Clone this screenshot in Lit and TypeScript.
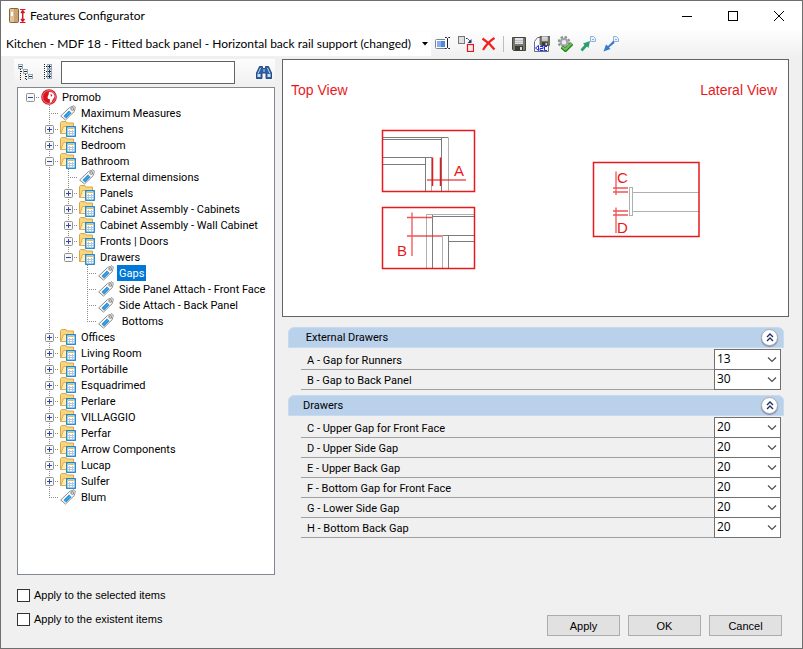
import { LitElement, html, svg, css, nothing } from "lit";
import { customElement, state } from "lit/decorators.js";
import { classMap } from "lit/directives/class-map.js";

interface TreeNode {
  label: string;
  children?: TreeNode[];
  folder?: boolean;
}

const folder = (label: string, children?: TreeNode[]): TreeNode => ({ label, children, folder: true });
const leaf = (label: string): TreeNode => ({ label });

const TREE: TreeNode = folder("Promob", [
  leaf("Maximum Measures"),
  folder("Kitchens"),
  folder("Bedroom"),
  folder("Bathroom", [
    leaf("External dimensions"),
    folder("Panels"),
    folder("Cabinet Assembly - Cabinets"),
    folder("Cabinet Assembly - Wall Cabinet"),
    folder("Fronts | Doors"),
    folder("Drawers", [
      leaf("Gaps"),
      leaf("Side Panel Attach - Front Face"),
      leaf("Side Attach - Back Panel"),
      leaf(" Bottoms"),
    ]),
  ]),
  folder("Offices"),
  folder("Living Room"),
  folder("Portábille"),
  folder("Esquadrimed"),
  folder("Perlare"),
  folder("VILLAGGIO"),
  folder("Perfar"),
  folder("Arrow Components"),
  folder("Lucap"),
  folder("Sulfer"),
  leaf("Blum"),
]);

const SECTIONS = [
  {
    title: " External Drawers",
    rows: [
      ["A - Gap for Runners", "13"],
      ["B - Gap to Back Panel", "30"],
    ],
  },
  {
    title: "Drawers",
    rows: [
      ["C - Upper Gap for Front Face", "20"],
      ["D - Upper Side Gap", "20"],
      ["E - Upper Back Gap", "20"],
      ["F - Bottom Gap for Front Face", "20"],
      ["G - Lower Side Gap", "20"],
      ["H - Bottom Back Gap", "20"],
    ],
  },
];

const icon = (body: unknown, w = 16, h = 16) =>
  html`<svg width=${w} height=${h} viewBox="0 0 ${w} ${h}" aria-hidden="true">${body}</svg>`;

const appIcon = html`<svg width="17" height="16" viewBox="0 0 17 16" aria-hidden="true">
  <rect x=".5" y=".5" width="9" height="14" rx="1" fill="#c9a576" stroke="#8a6238"/>
  <rect x="1" y="1" width="4" height="13" fill="#dfc39b"/>
  <rect x="2" y="4" width="2" height="4" fill="#fff"/>
  <path d="M11 1.500h5.500M11 14.500h5.500" stroke="#d8172c"/>
  <path d="M13.700 3v10M12 5l1.700-2.200L15.500 5M12 11l1.700 2.200 1.800-2.200" fill="none" stroke="#d8172c" stroke-width="1.500"/></svg>`;

const minIcon = icon(svg`<path d="M0 5.500h10" stroke="#000"/>`, 10, 10);
const maxIcon = icon(svg`<rect x=".5" y=".5" width="9" height="9" fill="none" stroke="#000"/>`, 10, 10);
const closeIcon = icon(svg`<path d="M0 0l10 10M10 0L0 10" stroke="#000"/>`, 10, 10);

const renameIcon = icon(svg`
  <rect x=".5" y="3.500" width="12" height="9" rx="1" fill="#fff" stroke="#7b8492"/>
  <rect x="2" y="5" width="8" height="6" fill="#4f8bdd"/><rect x="2" y="5" width="4" height="6" fill="#86aeea"/>
  <rect x="10" y="1" width="4" height="13" fill="#fbfbfb"/>
  <path d="M10 1.500h1.500l1 1 1-1H15M12.500 2.500v9M10 12.500h1.500l1-1 1 1H15" fill="none" stroke="#222"/>`);
const replaceIcon = icon(svg`
  <rect x=".5" y=".5" width="6" height="7" fill="#e4dfe2" stroke="#777"/>
  <rect x="9.500" y="8.500" width="6" height="7" fill="#fde9e9" stroke="#e3151b" stroke-width="1.200"/>
  <path d="M8 2.500h1.500l3 3" fill="none" stroke="#173a78" stroke-dasharray="2 .6"/>
  <path d="M13.500 3v4H9.500z" fill="#173a78"/>`);
const deleteIcon = icon(svg`
  <path d="M1.500 2.500C6 5.500 10 9 13.500 13.500" fill="none" stroke="#f0211f" stroke-width="2.200"/>
  <path d="M13.500 2C8.500 5 5 9 2 14" fill="none" stroke="#f0211f" stroke-width="2.200"/>`);
const disk = svg`
  <path d="M1.500 1.500h13v13h-12l-1-1z" fill="#77756a" stroke="#45443d"/>
  <rect x="4" y="2" width="8" height="6" fill="#dfe2e6"/><path d="M4 4.500h8M4 6.500h8" stroke="#b9bfc6"/>
  <rect x="4" y="10" width="8" height="5" fill="#3b3a34"/><rect x="9" y="11" width="2" height="3" fill="#dcdcdc"/>`;
const saveIcon = icon(disk);
const saveAsIcon = icon(svg`
  <path d="M.500 5.500l3-4H12l2.500 5v9H.500z" fill="#f7f8fa" stroke="#69707c"/>
  <g transform="translate(5 -1) scale(.72)">${disk}</g>
  <path d="M1.500 12l3-2.500v5zM6 10.500h3v2H6v2h3.500M13 10.500h-2.500v4H13" fill="none" stroke="#1d29e0"/>`);
const gearIcon = icon(svg`
  <circle cx="7" cy="6.200" r="5.200" fill="none" stroke="#8d9093" stroke-width="2.200" stroke-dasharray="2.400 1.680"/>
  <circle cx="7" cy="6.200" r="3.400" fill="#eee" stroke="#a1a4a7" stroke-width="2.200"/>
  <path d="M5 11l3.500 3 6.500-6.500" fill="none" stroke="#267a25" stroke-width="3.800"/>
  <path d="M5.300 11l3.200 2.500 6.200-6.200" fill="none" stroke="#69c94b" stroke-width="2"/>`);
const page = svg`<path d="M10.500.500h3l2 2v3h-5z" fill="#eaf3fd" stroke="#8fb2da"/><path d="M12 3.500h2" stroke="#8fb2da"/>`;
const exportIcon = icon(svg`${page}
  <path d="M.500 13.500l4-4.500L3 7.500 10 5 8.500 12 7 10.500l-4.500 5z" fill="#2c9c74"/>`);
const importIcon = icon(svg`${page}
  <path d="M10.500 4.500L5 10 3 8.500 .500 15.500 7.500 13 6 11.500 11.500 7z" fill="#377bcb"/>`);

const miniBox = (x: number, y: number, plus: boolean) => svg`
  <rect x=${x + 0.5} y=${y + 0.5} width="4" height="4" fill="#f6f9fc" stroke="#9aa7b5"/>
  <path d="M${x + 1} ${y + 2.5}h3" stroke="#15305a"/>
  ${plus ? svg`<path d="M${x + 2.5} ${y + 1}v3" stroke="#15305a"/>` : nothing}`;
const collapseIcon = icon(svg`
  <path d="M2.500 5v11M7.500 10v6M3 7.500h2M8 12.500h2M8 15.500h2" stroke="#222" stroke-dasharray="1 1"/>
  ${miniBox(0, 0, false)}${miniBox(5, 5, false)}${miniBox(10, 10, false)}`);
const expandIcon = icon(svg`
  <path d="M3.500 0v16M5 2.500h2M5 7.500h2M5 12.500h2" stroke="#222" stroke-dasharray="1 1"/>
  ${miniBox(6, 0, true)}${miniBox(6, 5, true)}${miniBox(6, 10, true)}`);
const findIcon = icon(svg`
  <path d="M3.500 2.500h3v2h3v-2h3L15.500 9v5.500h-5.500V9h-4v5.500H.500V9z" fill="#2f5f9f" stroke="#244c86" stroke-linejoin="round"/>
  <path d="M4.500 4L2 9.500M11.500 4L14 9.500M8 5v3" stroke="#b5d2f0"/>
  <rect x="1.500" y="10" width="3" height="3" fill="#c9def4"/><rect x="11.500" y="10" width="3" height="3" fill="#c9def4"/>`);

const logoIcon = icon(svg`
  <circle cx="8" cy="8" r="7.800" fill="#d8141f"/>
  <circle cx="8" cy="8" r="6.400" fill="none" stroke="#f1a5a9" stroke-width=".7"/>
  <path d="M8 3c3-.5 5.500 1.500 5.500 4.500-.5 2.500-2.500 3-2.500 5L9 14c-.5-1.500.5-3-.5-4H7L6.500 8 7.500 6z" fill="#fff"/>
  <path d="M9.500 5l2 1-1.500 2z" fill="#d8141f"/>`);
const folderIcon = icon(svg`
  <path d="M.500 12.500V1.500L1.500.500H6l1 1.500h6.500v10.500z" fill="#f8d67c" stroke="#dba54c"/>
  <path d="M1 12.500L3.500 5.500h11l-2.500 7z" fill="#ffefb4" stroke="#dfae55"/>
  <rect x="6.750" y="5.750" width="8.500" height="9.500" fill="#fff" stroke="#1480c2" stroke-width="1.300"/>
  <path d="M8 7.500h6" stroke="#f3b552"/>
  <path d="M9.500 9v5M12.500 9v5M8 10.500h6M8 12.500h6" stroke="#a9cbe8"/>`);
const tagIcon = icon(svg`
  <path d="M.700 11L9.500 2.500 14 .800l1.300 1.300L14.300 6.500 5.500 15z" fill="#fafafa" stroke="#8a8a8a"/>
  <path d="M9.500 3L14 1.300l.800 1.200-1 4z" fill="#d2d2d2"/>
  <circle cx="12.200" cy="4" r="1.300" fill="#fff" stroke="#777" stroke-width=".9"/>
  <path d="M3.500 11l5.500-5.500L11.500 8 6 13.500z" fill="#2490d8"/>
  <path d="M4.700 12.300l5.500-5.500" stroke="#8fd0f5" stroke-width=".7" stroke-dasharray="1 .6"/>`);

const expander = (open: boolean) => icon(svg`
  <rect x=".5" y=".5" width="8" height="8" rx="1" fill="#f7f7f7" stroke="#919191"/>
  <path d="M2 4.500h5" stroke="#30499a"/>
  ${open ? nothing : svg`<path d="M4.500 2v5" stroke="#30499a"/>`}`, 9, 9);

const chevron = html`<svg class="chevron" width="10" height="6" viewBox="0 0 10 6" aria-hidden="true">
  <path d="M1 .5l4 4 4-4" fill="none" stroke="#505050" stroke-width="1.200"/></svg>`;

@customElement("feature-diagram")
export class FeatureDiagram extends LitElement {
  static styles = css`
    :host { display: block; background: #fff; border: 1px solid #646464; }
    svg { display: block; width: 100%; height: auto; font-family: "Liberation Sans", Arial, sans-serif; }
    .red { stroke: #e8191c; fill: none; }
    .thick { stroke-width: 1.5; }
    .soft { stroke-width: 1.3; stroke-opacity: 0.75; }
    .dark { stroke: #7c7c7c; fill: none; }
    .light { stroke: #b0b0b0; fill: none; }
    .txt { fill: #e8191c; font-size: 14px; }
    .mark { fill: #e8191c; font-size: 15px; }
  `;
  render() {
    return html`<svg viewBox="0 0 505 256" role="img" aria-label="Top and lateral views of drawer gaps">
      <text class="txt" x="8" y="35">Top View</text>
      <text class="txt" x="494" y="35" text-anchor="end">Lateral View</text>

      <path class="light" d="M158 77.500H165.500V132M148.500 97.500V132"/>
      <path class="dark" d="M100 77.500H165M100 79.500H158.500M158.500 77.500V132M100 97.500H149M142.500 97.500V132M100 104.500H142.500"/>
      <path class="red thick" d="M149.500 97.500V126M157.500 97.500V126"/>
      <path class="red soft" d="M144 120H183"/>
      <rect class="red thick" x="99.500" y="70.500" width="92" height="61"/>
      <text class="mark" x="171" y="116">A</text>

      <path class="light" d="M143.500 209V154.500H192M159.500 209V175.500"/>
      <path class="dark" d="M149.500 155V209M149.500 156.500H192M159.500 175.500H192M165.500 175.500V209M165.500 181.500H192"/>
      <path class="red soft" d="M129 152.500V196M124 157.500H149M124 176H159"/>
      <rect class="red thick" x="99.500" y="147.500" width="92" height="61"/>
      <text class="mark" x="114" y="196">B</text>

      <path class="light" d="M349.500 132.500H416M349.500 151.500H416"/>
      <rect class="light" x="346.500" y="127.500" width="3" height="28"/>
      <path class="red soft" d="M333 111.500V135M330 128H345M330 132H345M333 147.500V173M330 151H345M330 155H345"/>
      <rect class="red thick" x="310.500" y="102.500" width="105.500" height="74"/>
      <text class="mark" x="334" y="123">C</text>
      <text class="mark" x="334" y="173">D</text>
    </svg>`;
  }
}

@customElement("feature-tree")
export class FeatureTree extends LitElement {
  @state() private selected = "Gaps";

  static styles = css`
    :host {
      display: block;
      background: #fff;
      border: 1px solid #828790;
      padding: 1px 3px;
      font: 11px/16px Roboto, "Liberation Sans", sans-serif;
      overflow: hidden;
    }
    svg { display: block; }
    .row { display: flex; height: 16px; white-space: pre; }
    .cell {
      flex: 0 0 19px;
      display: grid;
      place-items: center;
      --dots-y: repeating-linear-gradient(#8a8a8a 0 1px, transparent 1px 2px);
      --dots-x: repeating-linear-gradient(90deg, #8a8a8a 0 1px, transparent 1px 2px);
      background-repeat: no-repeat;
    }
    .line { background-image: var(--dots-y); background-size: 1px 100%; background-position: 9px 0; }
    .root { background-image: var(--dots-x); background-size: 10px 1px; background-position: 9px 8px; }
    .branch {
      background-image: var(--dots-y), var(--dots-x);
      background-size: 1px 100%, 10px 1px;
      background-position: 9px 0, 9px 8px;
    }
    .last { background-size: 1px 8px, 10px 1px; }
    .glyph { flex: none; width: 16px; margin: 0 3px 0 1px; }
    .label { padding: 0 2px; height: 16px; line-height: 18px; cursor: default; }
    .selected { background: #0078d7; color: #fff; }
  `;

  private row(node: TreeNode, guides: boolean[], last: boolean, depth: number): unknown {
    const own = { cell: true, root: depth === 0, branch: depth > 0, last: last && depth > 0 };
    const glyph = depth === 0 ? logoIcon : node.folder ? folderIcon : tagIcon;
    const kids = node.children ?? [];
    const next = depth === 0 ? [false] : [...guides, !last];
    return html`<div class="row" role="treeitem" aria-selected=${node.label === this.selected} aria-level=${depth + 1}>
        ${guides.map((g) => html`<span class=${classMap({ cell: true, line: g })}></span>`)}
        <span class=${classMap(own)}>${node.folder ? expander(kids.length > 0) : nothing}</span>
        <span class="glyph">${glyph}</span>
        <span class=${classMap({ label: true, selected: node.label === this.selected })}
          @click=${() => (this.selected = node.label)}>${node.label}</span>
      </div>
      ${kids.map((k, i) => this.row(k, next, i === kids.length - 1, depth + 1))}`;
  }

  render() {
    return html`<div role="tree">${this.row(TREE, [], true, 0)}</div>`;
  }
}

@customElement("app-root")
export class AppRoot extends LitElement {
  static styles = css`
    :host {
      display: flex;
      flex-direction: column;
      box-sizing: border-box;
      min-height: 100vh;
      border: 1px solid #6e6e6e;
      background: #f0f0f0;
      color: #000;
      font: 11px/16px Roboto, "Liberation Sans", sans-serif;
    }
    *, *::before { box-sizing: border-box; }
    svg { display: block; flex: none; }
    button, input, select { font: inherit; color: inherit; margin: 0; border-radius: 0; }
    .titlebar { display: flex; align-items: center; height: 30px; background: #fff; padding-left: 8px; }
    .title { flex: 1; margin: 0 0 0 4px; font: 12px/16px Lato, "Noto Sans", sans-serif; }
    .win { display: grid; place-items: center; width: 46px; height: 30px; border: 0; padding: 0; background: none; }
    .toolbar { display: flex; align-items: center; height: 26px; background: linear-gradient(#fdfdfd, #f0f0f0); }
    .combo { position: relative; flex: 0 1 430px; display: flex; align-items: center; height: 24px; background: #fff; }
    .combo select {
      width: 100%; border: 0; padding: 0 16px 0 5px; background: none; appearance: none;
      font: 12px/20px Lato, "Noto Sans", sans-serif;
    }
    .arrow { position: absolute; right: 3px; pointer-events: none; }
    .tool { display: grid; place-items: center; width: 23px; height: 24px; border: 0; padding: 0; background: none; }
    .sep { width: 1px; height: 16px; margin: 0 3px; background: #bdbdbd; }
    .body { flex: 1; display: flex; gap: 7px; padding: 2px 13px 0 16px; }
    .left { flex: 0 0 258px; display: flex; flex-direction: column; }
    .right { flex: 1; min-width: 0; }
    .search { display: flex; align-items: center; height: 26px; margin: 0 0 2px -3px; background: linear-gradient(#fdfdfd, #f0f0f0); }
    .search input { flex: 1; min-width: 0; height: 23px; margin: 0 17px 0 1px; border: 1px solid #646464; background: #fff; padding: 0 4px; }
    feature-tree { flex: 1; }
    .check { display: flex; align-items: center; gap: 4px; height: 24px; font: 11px/16px "Liberation Sans", Arial, sans-serif; }
    .checks { padding-top: 8px; padding-bottom: 17px; }
    .check input { appearance: none; width: 13px; height: 13px; border: 1px solid #333; background: #fff; }
    .check input:checked { background: #0078d7; }
    .props { padding: 10px 7px 0 6px; }
    .section { margin-bottom: 5px; }
    .head {
      display: flex; align-items: center; justify-content: space-between; height: 21px; margin: 0 -2px 2px 0; padding: 0 5px 0 14px;
      background: #b9d1ea; border: 1px solid #c8daee; border-radius: 6px 6px 0 0; white-space: pre;
    }
    .head h2 { margin: 0; font: inherit; }
    .fold {
      display: grid; place-items: center; width: 17px; height: 17px; padding: 0; border: 1px solid #a7a9b8;
      border-radius: 50%; background: #fff; box-shadow: 0 1px 1px #8088a0;
    }
    .prop { display: flex; height: 20px; margin: 0 1px 0 13px; border-bottom: 1px solid #a0a0a0; line-height: 22px; }
    .prop label { flex: 1; padding-left: 6px; }
    .value { position: relative; flex: 0 0 67px; height: 21px; margin-top: -1px; }
    .value select {
      display: block; width: 100%; height: 21px; padding: 0 16px 2px 2px; border: 1px solid #707070; background: #fff; appearance: none;
      font: 12px/16px "Open Sans", "Noto Sans", sans-serif;
    }
    .chevron { position: absolute; right: 4px; top: 8px; pointer-events: none; }
    .footer { display: flex; justify-content: flex-end; gap: 8px; padding: 0 20px 12px; }
    .btn { width: 73px; height: 21px; padding: 0; border: 1px solid #adadad; background: #e1e1e1; font: 11px/16px "Liberation Sans", Arial, sans-serif; }
    .bottom { display: flex; justify-content: space-between; align-items: flex-end; padding-left: 16px; }
  `;

  private tool(name: string, glyph: unknown) {
    return html`<button class="tool" aria-label=${name}>${glyph}</button>`;
  }

  render() {
    return html`
      <header class="titlebar">
        ${appIcon}
        <h1 class="title">Features Configurator</h1>
        <button class="win" aria-label="Minimize">${minIcon}</button>
        <button class="win" aria-label="Maximize">${maxIcon}</button>
        <button class="win" aria-label="Close">${closeIcon}</button>
      </header>
      <div class="toolbar">
        <div class="combo">
          <select aria-label="Configuration">
            <option>Kitchen - MDF 18 - Fitted back panel - Horizontal back rail support (changed)</option>
          </select>
          <svg class="arrow" width="6" height="4" viewBox="0 0 6 4" aria-hidden="true"><path d="M0 0h6L3 3.500z"/></svg>
        </div>
        ${this.tool("Rename", renameIcon)}${this.tool("Replace", replaceIcon)}${this.tool("Delete", deleteIcon)}
        <span class="sep"></span>
        ${this.tool("Save", saveIcon)}${this.tool("Save as", saveAsIcon)}${this.tool("Validate", gearIcon)}
        ${this.tool("Export", exportIcon)}${this.tool("Import", importIcon)}
      </div>
      <main class="body">
        <div class="left">
          <div class="search">
            ${this.tool("Collapse all", collapseIcon)}${this.tool("Expand all", expandIcon)}
            <input type="text" aria-label="Search" />
            ${this.tool("Find", findIcon)}
          </div>
          <feature-tree></feature-tree>
        </div>
        <div class="right">
          <feature-diagram></feature-diagram>
          <div class="props">
            ${SECTIONS.map(
              (s, i) => html`<section class="section">
                <div class="head">
                  <h2>${s.title}</h2>
                  <button class="fold" aria-label="Collapse section">
                    ${icon(svg`<path d="M1 4l3-3 3 3M1 8l3-3 3 3" fill="none" stroke="#1f2f66" stroke-width="1.400"/>`, 8, 9)}
                  </button>
                </div>
                ${s.rows.map(
                  ([label, value], j) => html`<div class="prop">
                    <label for="p${i}-${j}">${label}</label>
                    <div class="value">
                      <select id="p${i}-${j}"><option>${value}</option></select>
                      ${chevron}
                    </div>
                  </div>`
                )}
              </section>`
            )}
          </div>
        </div>
      </main>
      <footer class="bottom">
        <div class="checks">
          <label class="check"><input type="checkbox" />Apply to the selected items</label>
          <label class="check"><input type="checkbox" />Apply to the existent items</label>
        </div>
        <div class="footer">
          <button class="btn">Apply</button>
          <button class="btn">OK</button>
          <button class="btn">Cancel</button>
        </div>
      </footer>
    `;
  }
}
